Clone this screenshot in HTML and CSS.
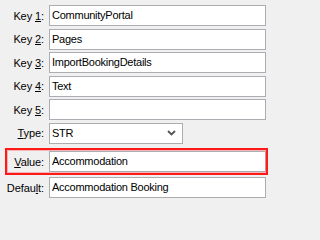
FILE: index.html
```html
<!DOCTYPE html>
<html>
<head>
<meta charset="utf-8">
<link rel="stylesheet" href="styles.css">
</head>
<body>
<div class="form">
  <div class="row"><label class="lbl">Key <u>1</u>:</label><div class="field">CommunityPortal</div></div>
  <div class="row"><label class="lbl">Key <u>2</u>:</label><div class="field">Pages</div></div>
  <div class="row"><label class="lbl">Key <u>3</u>:</label><div class="field">ImportBookingDetails</div></div>
  <div class="row"><label class="lbl">Key <u>4</u>:</label><div class="field">Text</div></div>
  <div class="row"><label class="lbl">Key <u>5</u>:</label><div class="field"></div></div>
  <div class="row"><label class="lbl"><u>T</u>ype:</label><div class="field select"><span>STR</span><svg class="chev" width="9" height="6" viewBox="0 0 9 6"><path d="M1 1 L4.5 4.5 L8 1" fill="none" stroke="#555" stroke-width="1.8"/></svg></div></div>
  <div class="row hl"><label class="lbl"><u>V</u>alue:</label><div class="field">Accommodation</div></div>
  <div class="row"><label class="lbl">Defau<u>l</u>t:</label><div class="field">Accommodation Booking</div></div>
</div>
</body>
</html>
```
FILE: styles.css
```css
html, body {
  margin: 0;
  padding: 0;
  background: #f0f0f0;
}
body {
  font-family: "Liberation Sans", Arial, sans-serif;
  font-size: 11px;
  color: #000;
}
.form {
  display: flex;
  flex-direction: column;
  gap: 2.5px;
  padding-top: 5px;
  width: 271px;
}
.row {
  display: grid;
  grid-template-columns: 44px 217px;
  column-gap: 5px;
  align-items: center;
  height: 21px;
}
.lbl {
  text-align: right;
  white-space: nowrap;
  letter-spacing: -0.1px;
}
.lbl u {
  text-decoration-thickness: 1px;
  text-underline-offset: 1px;
}
.field {
  box-sizing: border-box;
  height: 21px;
  border: 1px solid #abadb3;
  background: #fff;
  padding: 0 2px;
  line-height: 19px;
  white-space: nowrap;
  overflow: hidden;
  letter-spacing: -0.25px;
}
.select {
  width: 134px;
  display: flex;
  align-items: center;
  justify-content: space-between;
  padding-right: 6px;
  border-color: #adadad;
}
.chev {
  display: block;
}
.hl {
  position: relative;
  margin-top: 5px;
  margin-bottom: 2.5px;
}
.hl::after {
  content: "";
  position: absolute;
  left: 5px;
  right: 3px;
  top: -3px;
  bottom: -3px;
  border: 2px solid #ff1a1a;
  box-shadow: inset 0 0 0 1px rgba(255, 120, 120, 0.5);
  pointer-events: none;
}
```
